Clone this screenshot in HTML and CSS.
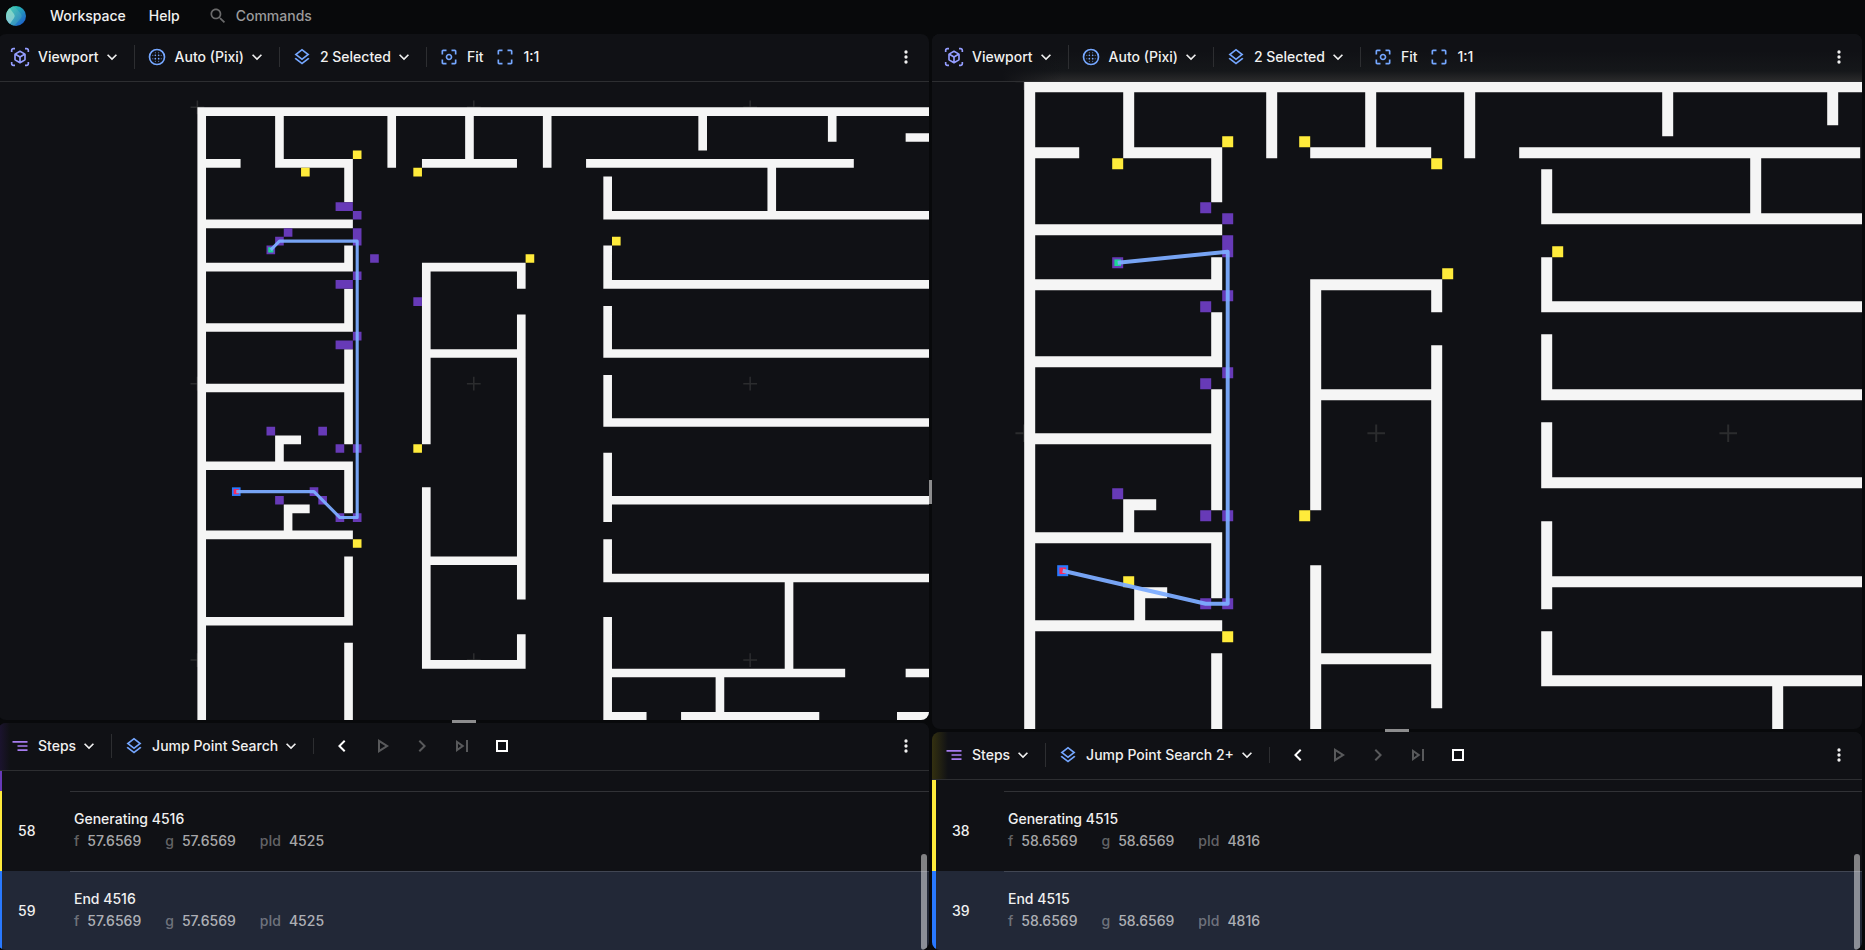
FILE: index.html
```html
<!DOCTYPE html>
<html lang="en">
<head>
<meta charset="utf-8">
<title>Workspace</title>
<link rel="stylesheet" href="styles.css">
</head>
<body>
<svg class="sprite" aria-hidden="true">
  <defs>
    <linearGradient id="logo-a" x1="0" y1="0" x2="1" y2="1"><stop offset="0" stop-color="#2ee6a8"/><stop offset="1" stop-color="#1b4fd0"/></linearGradient>
    <linearGradient id="logo-b" x1="0" y1="0" x2="1" y2="1"><stop offset="0" stop-color="#4fd8b4"/><stop offset="1" stop-color="#2f7fc4"/></linearGradient>
    <linearGradient id="logo-c" x1="0" y1="0" x2="0" y2="1"><stop offset="0" stop-color="#7fdcc0"/><stop offset="1" stop-color="#86c3d6"/></linearGradient>
    <clipPath id="logo-clip"><circle cx="10" cy="10" r="10"/></clipPath>
  </defs>
  <symbol id="i-view" viewBox="0 0 24 24"><path d="M3 4c0-.55.45-1 1-1h2V1H4C2.34 1 1 2.34 1 4v2h2V4zm0 16v-2H1v2c0 1.66 1.34 3 3 3h2v-2H4c-.55 0-1-.45-1-1zM20 1h-2v2h2c.55 0 1 .45 1 1v2h2V4c0-1.66-1.34-3-3-3zm1 19c0 .55-.45 1-1 1h-2v2h2c1.66 0 3-1.34 3-3v-2h-2v2zm-2-5.13V9.13c0-.72-.38-1.38-1-1.73l-5-2.88c-.31-.18-.65-.27-1-.27s-.69.09-1 .27L6 7.39c-.62.36-1 1.02-1 1.74v5.74c0 .72.38 1.38 1 1.73l5 2.88c.31.18.65.27 1 .27s.69-.09 1-.27l5-2.88c.62-.35 1-1.01 1-1.73zm-8 2.3l-4-2.3v-4.63l4 2.33v4.6zm1-6.33L8.04 8.53 12 6.25l3.96 2.28L12 10.84zm5 4.03l-4 2.3v-4.6l4-2.33v4.63z"/></symbol>
  <symbol id="i-blur" viewBox="0 0 24 24"><circle cx="12" cy="12" r="9" fill="none" stroke="currentColor" stroke-width="2"/><circle cx="10" cy="10" r="1"/><circle cx="14" cy="10" r="1"/><circle cx="10" cy="14" r="1"/><circle cx="14" cy="14" r="1"/><circle cx="7" cy="10" r=".6"/><circle cx="7" cy="14" r=".6"/><circle cx="17" cy="10" r=".6"/><circle cx="17" cy="14" r=".6"/><circle cx="10" cy="7" r=".6"/><circle cx="14" cy="7" r=".6"/><circle cx="10" cy="17" r=".6"/><circle cx="14" cy="17" r=".6"/></symbol>
  <symbol id="i-layers" viewBox="0 0 24 24"><path d="M11.99 18.54l-7.37-5.73L3 14.07l9 7 9-7-1.63-1.27zM12 16l7.36-5.73L21 9l-9-7-9 7 1.63 1.27L12 16zm0-11.47L17.74 9 12 13.47 6.26 9 12 4.53z"/></symbol>
  <symbol id="i-fit" viewBox="0 0 24 24"><path d="M5 15H3v4c0 1.1.9 2 2 2h4v-2H5v-4zM5 5h4V3H5c-1.1 0-2 .9-2 2v4h2V5zm14-2h-4v2h4v4h2V5c0-1.1-.9-2-2-2zm0 16h-4v2h4c1.1 0 2-.9 2-2v-4h-2v4zM12 8c-2.21 0-4 1.79-4 4s1.79 4 4 4 4-1.79 4-4-1.79-4-4-4zm0 6c-1.1 0-2-.9-2-2s.9-2 2-2 2 .9 2 2-.9 2-2 2z"/></symbol>
  <symbol id="i-full" viewBox="0 0 24 24"><path d="M3 5v4h2V5h4V3H5c-1.1 0-2 .9-2 2zm2 10H3v4c0 1.1.9 2 2 2h4v-2H5v-4zm14 4h-4v2h4c1.1 0 2-.9 2-2v-4h-2v4zm0-16h-4v2h4v4h2V5c0-1.1-.9-2-2-2z"/></symbol>
  <symbol id="i-down" viewBox="0 0 24 24"><path d="M7.41 8.59 12 13.17l4.59-4.58L18 10l-6 6-6-6z"/></symbol>
  <symbol id="i-segment" viewBox="0 0 24 24"><path d="M9 18h12v-2H9v2zM3 6v2h18V6H3zm6 7h12v-2H9v2z"/></symbol>
  <symbol id="i-search" viewBox="0 0 24 24"><path d="M15.5 14h-.79l-.28-.27C15.41 12.59 16 11.11 16 9.5 16 5.91 13.09 3 9.5 3S3 5.91 3 9.5 5.91 16 9.5 16c1.61 0 3.09-.59 4.23-1.57l.27.28v.79l5 4.99L20.49 19l-4.99-5zm-6 0C7.01 14 5 11.99 5 9.5S7.01 5 9.5 5 14 7.01 14 9.5 11.99 14 9.5 14z"/></symbol>
  <symbol id="i-more" viewBox="0 0 24 24"><circle cx="12" cy="6" r="2"/><circle cx="12" cy="12" r="2"/><circle cx="12" cy="18" r="2"/></symbol>
  <symbol id="i-prev" viewBox="0 0 24 24"><path d="M15.41 7.41 14 6l-6 6 6 6 1.41-1.41L10.83 12z"/></symbol>
  <symbol id="i-play" viewBox="0 0 24 24"><path d="M10 8.64 15.27 12 10 15.36V8.64M8 5v14l11-7L8 5z"/></symbol>
  <symbol id="i-next" viewBox="0 0 24 24"><path d="M10 6 8.59 7.41 13.17 12l-4.58 4.59L10 18l6-6z"/></symbol>
  <symbol id="i-skip" viewBox="0 0 24 24"><path d="m6 18 8.500-6L6 6v12zm2-8.140L11.030 12 8 14.140V9.860zM16 6h2v12h-2z"/></symbol>
  <symbol id="i-stop" viewBox="0 0 24 24"><path d="M16 8v8H8V8h8m2-2H6v12h12V6z"/></symbol>

  <!-- Floor plan; one unit is one grid cell -->
  <g id="crosses" fill="none" stroke="#2b2c2e" stroke-width=".18">
    <path d="M-.8 0H.8M0-.8V.8M31.200 0h1.600M32-.8V.8M63.200 0h1.600M64-.8V.8M-.8 32H.8M0 31.200v1.600M31.200 32h1.600M32 31.200v1.600M63.200 32h1.600M64 31.200v1.600M-.8 64H.8M0 63.200v1.600M31.200 64h1.600M32 63.200v1.600M63.200 64h1.600M64 63.200v1.600"/>
  </g>
  <path id="walls" fill="#f5f5f5" d="M0 0h120v1H0z M0 0h1v90H0z
    M9 0h1v7H9z M9 6h9v1H9z M17 6h1v5h-1z M1 6h4v1H1z M22 0h1v7h-1z M31 0h1v7h-1z M26 6h11v1H26z M40 0h1v7h-1z
    M0 13h18v1H0z M17 16h1v3h-1z M0 18h18v1H0z M17 21h1v5h-1z M0 25h18v1H0z M17 28h1v11h-1z M0 32h18v1H0z
    M0 41h18v1H0z M17 41h1v6h-1z M9 38h3v1H9z M9 38h1v4H9z M0 49h18v1H0z M10 46h3v1h-3z M10 46h1v4h-1z
    M17 52h1v8h-1z M0 59h18v1H0z M17 62h1v28h-1z
    M26 18h12v1H26z M37 18h1v3h-1z M37 24h1v33h-1z M26 18h1v21h-1z M26 28h12v1H26z M26 44h1v21h-1z M26 52h12v1H26z M37 61h1v4h-1z M26 64h12v1H26z
    M58 0h1v5h-1z M73 0h1v4h-1z M82 3h30v1H82z M45 6h31v1H45z M66 6h1v7h-1z
    M47 8h1v5h-1z M47 12h73v1H47z M47 16h1v5h-1z M47 20h73v1H47z M47 23h1v6h-1z M47 28h73v1H47z
    M47 31h1v6h-1z M47 36h73v1H47z M47 40h1v8h-1z M47 45h73v1H47z M47 50h1v5h-1z M47 54h73v1H47z
    M47 59h1v12h-1z M47 65h28v1H47z M82 65h30v1H82z M68 54h1v12h-1z M60 65h1v6h-1z M47 70h5v1h-5z M56 70h16v1H56z M81 70h30v1H81z"/>
</svg>

<header class="topbar">
  <svg class="logo" viewBox="0 0 20 20" aria-hidden="true"><g clip-path="url(#logo-clip)"><path fill="url(#logo-a)" d="M0 0h20v20H0z"/><path fill="url(#logo-b)" d="M0 0h8l7 8q1.500 2 0 4l-7 8H0z"/><path fill="url(#logo-c)" d="M0 0h2l6 8q1.500 2 0 4l-5 7-3 1z"/></g></svg>
  <nav class="menu">
    <button class="menu-item" type="button">Workspace</button>
    <button class="menu-item" type="button">Help</button>
  </nav>
  <button class="commands" type="button"><svg class="icon"><use href="#i-search"/></svg>Commands</button>
</header>

<main class="workspace">
  <section class="column column-left">
    <article class="panel">
      <div class="toolbar">
        <button class="tool" type="button"><svg class="icon indigo"><use href="#i-view"/></svg><span>Viewport</span><svg class="icon caret"><use href="#i-down"/></svg></button>
        <span class="rule rule-tall"></span>
        <button class="tool" type="button"><svg class="icon blue"><use href="#i-blur"/></svg><span>Auto (Pixi)</span><svg class="icon caret"><use href="#i-down"/></svg></button>
        <span class="rule"></span>
        <button class="tool" type="button"><svg class="icon blue"><use href="#i-layers"/></svg><span>2 Selected</span><svg class="icon caret"><use href="#i-down"/></svg></button>
        <span class="rule"></span>
        <button class="tool" type="button"><svg class="icon blue"><use href="#i-fit"/></svg><span>Fit</span></button>
        <button class="tool" type="button"><svg class="icon blue"><use href="#i-full"/></svg><span>1:1</span></button>
        <button class="more" type="button" aria-label="More"><svg class="icon"><use href="#i-more"/></svg></button>
      </div>
      <svg class="map" role="img" aria-label="Jump Point Search map">
        <g transform="translate(199.400 25.300) scale(8.637)">
          <use href="#crosses"/><use href="#walls"/>
          <path fill="#ffeb3b" d="M18 5h1v1h-1z M12 7h1v1h-1z M25 7h1v1h-1z M38 17h1v1h-1z M48 15h1v1h-1z M25 39h1v1h-1z M18 50h1v1h-1z"/>
          <path fill="#673ab7" d="M16 11h2v1h-2z M18 12h1v1h-1z M18 14h1v2h-1z M10 14h1v1h-1z M9 15h1v1H9z M8 16h1v1H8z M20 17h1v1h-1z M18 19h1v1h-1z M16 20h2v1h-2z M25 22h1v1h-1z M18 26h1v1h-1z M16 27h2v1h-2z M8 37h1v1H8z M14 37h1v1h-1z M16 39h1v1h-1z M18 39h1v1h-1z M13 44h1v1h-1z M14 45h1v1h-1z M9 45h1v1H9z M16 47h1v1h-1z M18 47h1v1h-1z"/>
          <path fill="#2979ff" d="M4 44h1v1H4z"/>
          <path fill="#f92a5c" d="M4.200 44.200h.6v.6h-.6z"/>
          <path fill="#1cd693" d="M8.200 16.200h.6v.6h-.6z"/>
          <path class="route" d="M8.500 16.500l1-1h9v32h-2l-3-3h-9"/>
        </g>
      </svg>
    </article>
    <div class="splitter splitter-row" role="separator"><span class="grip"></span></div>
    <article class="panel">
      <div class="toolbar toolbar-violet">
        <button class="tool" type="button"><svg class="icon violet"><use href="#i-segment"/></svg><span>Steps</span><svg class="icon caret"><use href="#i-down"/></svg></button>
        <span class="rule rule-tall"></span>
        <button class="tool" type="button"><svg class="icon blue"><use href="#i-layers"/></svg><span>Jump Point Search</span><svg class="icon caret"><use href="#i-down"/></svg></button>
        <span class="rule rule-short"></span>
        <div class="playback">
          <button class="play-button" type="button" aria-label="Step back"><svg class="icon-large"><use href="#i-prev"/></svg></button>
          <button class="play-button" type="button" aria-label="Play" disabled><svg class="icon-large"><use href="#i-play"/></svg></button>
          <button class="play-button" type="button" aria-label="Step forward" disabled><svg class="icon-large"><use href="#i-next"/></svg></button>
          <button class="play-button" type="button" aria-label="Skip to end" disabled><svg class="icon-large"><use href="#i-skip"/></svg></button>
          <button class="play-button" type="button" aria-label="Stop"><svg class="icon-large"><use href="#i-stop"/></svg></button>
        </div>
        <button class="more" type="button" aria-label="More"><svg class="icon"><use href="#i-more"/></svg></button>
      </div>
      <div class="list">
        <ol class="steps">
          <li class="step step-rest expanding"></li>
          <li class="step generating">
            <span class="index">58</span>
            <div class="body"><p class="title">Generating 4516</p>
              <dl class="facts"><div><dt>f</dt><dd>57.6569</dd></div><div><dt>g</dt><dd>57.6569</dd></div><div><dt>pId</dt><dd>4525</dd></div></dl></div>
          </li>
          <li class="step end">
            <span class="index">59</span>
            <div class="body"><p class="title">End 4516</p>
              <dl class="facts"><div><dt>f</dt><dd>57.6569</dd></div><div><dt>g</dt><dd>57.6569</dd></div><div><dt>pId</dt><dd>4525</dd></div></dl></div>
          </li>
        </ol>
        <span class="thumb"></span>
      </div>
    </article>
  </section>

  <div class="splitter splitter-column" role="separator" aria-orientation="vertical"><span class="grip"></span></div>

  <section class="column column-right">
    <article class="panel">
      <div class="toolbar toolbar-lit">
        <button class="tool" type="button"><svg class="icon indigo"><use href="#i-view"/></svg><span>Viewport</span><svg class="icon caret"><use href="#i-down"/></svg></button>
        <span class="rule rule-tall"></span>
        <button class="tool" type="button"><svg class="icon blue"><use href="#i-blur"/></svg><span>Auto (Pixi)</span><svg class="icon caret"><use href="#i-down"/></svg></button>
        <span class="rule"></span>
        <button class="tool" type="button"><svg class="icon blue"><use href="#i-layers"/></svg><span>2 Selected</span><svg class="icon caret"><use href="#i-down"/></svg></button>
        <span class="rule"></span>
        <button class="tool" type="button"><svg class="icon blue"><use href="#i-fit"/></svg><span>Fit</span></button>
        <button class="tool" type="button"><svg class="icon blue"><use href="#i-full"/></svg><span>1:1</span></button>
        <button class="more" type="button" aria-label="More"><svg class="icon"><use href="#i-more"/></svg></button>
      </div>
      <svg class="map" role="img" aria-label="Jump Point Search 2+ map">
        <g transform="translate(92.200 -.8) scale(11)">
          <use href="#crosses"/><use href="#walls"/>
          <path fill="#ffeb3b" d="M18 5h1v1h-1z M8 7h1v1H8z M25 5h1v1h-1z M37 7h1v1h-1z M38 17h1v1h-1z M48 15h1v1h-1z M25 39h1v1h-1z M9 45h1v1H9z M18 50h1v1h-1z"/>
          <path fill="#673ab7" d="M16 11h1v1h-1z M18 12h1v1h-1z M18 14h1v2h-1z M8 16h1v1H8z M18 19h1v1h-1z M16 20h1v1h-1z M18 26h1v1h-1z M16 27h1v1h-1z M8 37h1v1H8z M16 39h1v1h-1z M18 39h1v1h-1z M16 47h1v1h-1z M18 47h1v1h-1z"/>
          <path fill="#2979ff" d="M3 44h1v1H3z"/>
          <path fill="#f92a5c" d="M3.200 44.200h.6v.6h-.6z"/>
          <path fill="#1cd693" d="M8.200 16.200h.6v.6h-.6z"/>
          <path class="route" d="M8.500 16.500l10-1v32h-2l-13-3"/>
        </g>
      </svg>
    </article>
    <div class="splitter splitter-row" role="separator"><span class="grip"></span></div>
    <article class="panel">
      <div class="toolbar toolbar-yellow">
        <button class="tool" type="button"><svg class="icon violet"><use href="#i-segment"/></svg><span>Steps</span><svg class="icon caret"><use href="#i-down"/></svg></button>
        <span class="rule rule-tall"></span>
        <button class="tool" type="button"><svg class="icon blue"><use href="#i-layers"/></svg><span>Jump Point Search 2+</span><svg class="icon caret"><use href="#i-down"/></svg></button>
        <span class="rule rule-short"></span>
        <div class="playback">
          <button class="play-button" type="button" aria-label="Step back"><svg class="icon-large"><use href="#i-prev"/></svg></button>
          <button class="play-button" type="button" aria-label="Play" disabled><svg class="icon-large"><use href="#i-play"/></svg></button>
          <button class="play-button" type="button" aria-label="Step forward" disabled><svg class="icon-large"><use href="#i-next"/></svg></button>
          <button class="play-button" type="button" aria-label="Skip to end" disabled><svg class="icon-large"><use href="#i-skip"/></svg></button>
          <button class="play-button" type="button" aria-label="Stop"><svg class="icon-large"><use href="#i-stop"/></svg></button>
        </div>
        <button class="more" type="button" aria-label="More"><svg class="icon"><use href="#i-more"/></svg></button>
      </div>
      <div class="list">
        <ol class="steps">
          <li class="step step-rest generating"></li>
          <li class="step generating">
            <span class="index">38</span>
            <div class="body"><p class="title">Generating 4515</p>
              <dl class="facts"><div><dt>f</dt><dd>58.6569</dd></div><div><dt>g</dt><dd>58.6569</dd></div><div><dt>pId</dt><dd>4816</dd></div></dl></div>
          </li>
          <li class="step end">
            <span class="index">39</span>
            <div class="body"><p class="title">End 4515</p>
              <dl class="facts"><div><dt>f</dt><dd>58.6569</dd></div><div><dt>g</dt><dd>58.6569</dd></div><div><dt>pId</dt><dd>4816</dd></div></dl></div>
          </li>
        </ol>
        <span class="thumb"></span>
      </div>
    </article>
  </section>
</main>
</body>
</html>
```
FILE: styles.css
```css
* { box-sizing: border-box; }

body {
  margin: 0;
  height: 100vh;
  display: flex;
  flex-direction: column;
  overflow: hidden;
  background: #08090b;
  color: #f0f0f0;
  font: 500 14px/20px Inter, "Liberation Sans", sans-serif;
}

button {
  margin: 0;
  padding: 0;
  border: 0;
  background: none;
  color: inherit;
  font: inherit;
  white-space: nowrap;
}

ol, dl, dd, p { margin: 0; padding: 0; }

.sprite { position: absolute; width: 0; height: 0; }

.icon { width: 20px; height: 20px; flex: none; fill: currentColor; }
.icon-large { width: 24px; height: 24px; flex: none; fill: currentColor; }
.blue { color: #75a7ff; }
.indigo { color: #949dff; }
.violet { color: #a67cf0; }

/* Top bar */
.topbar {
  height: 34px;
  flex: none;
  display: flex;
  align-items: center;
  padding: 0 6px 2px;
}
.logo { width: 20px; height: 20px; }
.menu { display: flex; gap: 23px; margin-left: 24px; }
.commands {
  display: flex;
  align-items: center;
  gap: 8px;
  margin-left: 28px;
  color: #9b9b9c;
}
.commands .icon { color: #6a6a6b; }

/* Panels */
.workspace {
  flex: 1;
  min-height: 0;
  margin: 0 3px 0 -2px;
  display: grid;
  grid-template-columns: minmax(0, 931fr) 3px minmax(0, 930fr);
}
.column { display: grid; min-height: 0; }
.column-left { grid-template-rows: minmax(0, 686fr) 3px minmax(0, 227fr); }
.column-right { grid-template-rows: minmax(0, 695fr) 3px minmax(0, 218fr); }

.panel {
  display: flex;
  flex-direction: column;
  min-height: 0;
  overflow: hidden;
  border-radius: 8px;
  background: #101115;
}

.splitter { display: flex; align-items: center; justify-content: center; }
.grip { background: #8d8d8e; }
.splitter-row .grip { width: 24px; height: 3px; }
.splitter-column .grip { width: 3px; height: 24px; }

.toolbar {
  height: 48px;
  flex: none;
  display: flex;
  align-items: center;
  gap: 12px;
  padding: 0 13px 1px 12px;
  border-bottom: 1px solid #2d2e31;
}
.toolbar-lit {
  background: linear-gradient(90deg, #101115 70px, #10111500 130px), linear-gradient(0deg, #2a2a2b, #15171a 10px, #101115 30px);
}
.toolbar-violet { background: linear-gradient(90deg, #1d1433, #101115 12px); }
.toolbar-yellow { background: linear-gradient(90deg, #333010, #101115 16px); }

.tool { display: flex; align-items: center; }
.tool span { margin-left: 8px; }
.caret { margin-left: 3px; }
.rule { width: 1px; height: 20px; background: #2d2e31; }
.rule-tall { height: 24px; }
.rule-short { height: 16px; }
.more { display: flex; margin-left: auto; }

.playback { display: flex; margin-left: -4px; }
.play-button { width: 40px; display: flex; justify-content: center; color: #fff; }
.play-button:disabled { color: #58595b; }

/* Map */
.map { flex: 1; min-height: 0; width: 100%; display: block; }
.route {
  fill: none;
  stroke: #7cacff;
  stroke-width: .36;
  stroke-linejoin: round;
  opacity: .95;
}

/* Steps list */
.list { flex: 1; min-height: 0; position: relative; display: flex; }
.steps { flex: 1; display: flex; flex-direction: column; list-style: none; }
.step {
  height: 80px;
  flex: none;
  display: flex;
  align-items: center;
  border-left: 4px solid;
}
.step-rest { flex: 1; }
.expanding { border-color: #673ab7; }
.generating { border-color: #ffeb3b; }
.end { border-color: #2979ff; background: #222837; }
.step.end { height: 79px; }
.index { width: 68px; padding-left: 16px; }
.body {
  flex: 1;
  align-self: stretch;
  padding: 17px 0 0 4px;
  border-top: 1px solid rgba(255, 255, 255, .14);
}
.facts { display: flex; gap: 24px; margin-top: 2px; color: rgba(255, 255, 255, .65); }
.facts div { display: flex; gap: 8px; }
.facts dt { color: rgba(255, 255, 255, .36); }

.thumb {
  position: absolute;
  right: 2px;
  bottom: 0;
  width: 6px;
  height: 96px;
  border-radius: 3px;
  background: rgba(255, 255, 255, .48);
}
```
